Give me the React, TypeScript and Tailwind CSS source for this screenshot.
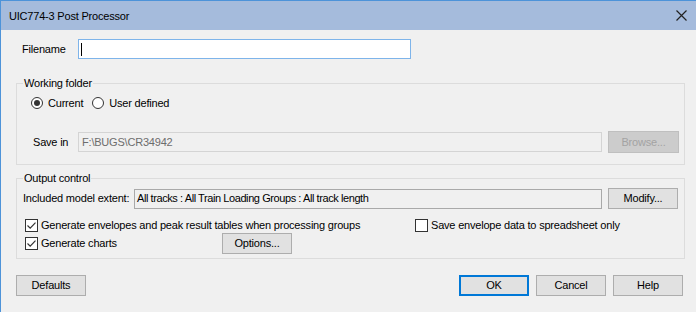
import React from "react";

const font = "font-['Liberation_Sans',Arial,sans-serif]";

function Button({
  label,
  disabled,
  primary,
}: {
  label: string;
  disabled?: boolean;
  primary?: boolean;
}) {
  let cls =
    "flex h-[21px] w-[70px] shrink-0 items-center justify-center border text-[11px] tracking-[-0.2px] ";
  if (disabled) {
    cls += "border-[#bfbfbf] bg-[#cccccc] text-[#a0a0a0]";
  } else if (primary) {
    cls += "border-[#0078d7] bg-[#e1e1e1] text-black shadow-[inset_0_0_0_1px_#0078d7]";
  } else {
    cls += "border-[#adadad] bg-[#e1e1e1] text-black";
  }
  return (
    <button type="button" disabled={disabled} className={cls}>
      {label}
    </button>
  );
}

function Checkbox({ label, checked }: { label: string; checked?: boolean }) {
  return (
    <label className="flex h-[14px] items-center">
      <span className="flex h-[13px] w-[13px] shrink-0 items-center justify-center border border-[#333333] bg-white">
        {checked && (
          <svg width="11" height="11" viewBox="0 0 11 11">
            <path d="M1.5 5.5 L4.2 8.2 L9.5 2.6" fill="none" stroke="#333333" strokeWidth="1.2" />
          </svg>
        )}
      </span>
      <span className="ml-[3px] whitespace-nowrap">{label}</span>
    </label>
  );
}

function Radio({ label, checked }: { label: string; checked?: boolean }) {
  return (
    <label className="flex h-[14px] items-center">
      <span className="flex h-[12px] w-[12px] shrink-0 items-center justify-center rounded-full border border-[#333333] bg-white">
        {checked && <span className="h-[6px] w-[6px] rounded-full bg-[#333333]" />}
      </span>
      <span className="ml-[5px] whitespace-nowrap">{label}</span>
    </label>
  );
}

export default function App() {
  return (
    <div
      className={`${font} h-[312px] w-[696px] overflow-hidden border-l border-t border-[#4d93d9] bg-[#f0f0f0] text-[11px] tracking-[-0.2px] text-black`}
    >
      <div className="flex h-[29px] items-center justify-between bg-[#a5bbdc] pl-[8px] pr-[9px]">
        <span className="pt-[2px]">UIC774-3 Post Processor</span>
        <svg width="11" height="11" viewBox="0 0 11 11">
          <path d="M0.5 0.5 L10.5 10.5 M10.5 0.5 L0.5 10.5" stroke="#222222" strokeWidth="1.2" />
        </svg>
      </div>

      <div className="pl-[15px] pt-[9px]">
        <div className="flex h-[20px] items-center">
          <span className="w-[62px] pl-[6px]">Filename</span>
          <div className="flex h-[20px] w-[333px] items-center border border-[#7eb4ea] bg-white pl-[2px]">
            <span className="h-[13px] w-px bg-black" />
          </div>
        </div>

        <fieldset className="mt-[17px] w-[669px] border border-[#dcdcdc] pb-[11px]">
          <legend className="ml-[6px] px-px leading-[14px]">Working folder</legend>
          <div className="mt-[6px] flex items-center gap-[9px] pl-[14px]">
            <Radio label="Current" checked />
            <Radio label="User defined" />
          </div>
          <div className="mt-[21px] flex h-[22px] items-center">
            <span className="w-[61px] pl-[16px]">Save in</span>
            <div className="flex h-[20px] w-[524px] items-center border border-[#d4d4d4] bg-[#f0f0f0] pl-[3px] text-[#6d6d6d]">
              F:\BUGS\CR34942
            </div>
            <div className="ml-[6px]">
              <button
                type="button"
                disabled
                className="flex h-[22px] w-[71px] items-center justify-center border border-[#bfbfbf] bg-[#cccccc] text-[#a3a3a3]"
              >
                Browse...
              </button>
            </div>
          </div>
        </fieldset>

        <fieldset className="mt-[6px] w-[669px] border border-[#dcdcdc] pb-[4px]">
          <legend className="ml-[6px] px-px leading-[14px]">Output control</legend>
          <div className="mt-[3px] flex h-[21px] items-center">
            <span className="w-[117px] whitespace-nowrap pl-[6px]">Included model extent:</span>
            <div className="flex h-[20px] w-[468px] items-center border border-[#a9a9a9] bg-[#f0f0f0] pl-[2px] text-[11px] tracking-[-0.42px]">
              All tracks : All Train Loading Groups : All track length
            </div>
            <div className="ml-[6px]">
              <Button label="Modify..." />
            </div>
          </div>
          <div className="mt-[9px] flex items-center pl-[8px]">
            <div className="w-[390px]">
              <Checkbox label="Generate envelopes and peak result tables when processing groups" checked />
            </div>
            <Checkbox label="Save envelope data to spreadsheet only" />
          </div>
          <div className="mt-px flex h-[21px] items-center pl-[8px]">
            <div className="w-[197px]">
              <Checkbox label="Generate charts" checked />
            </div>
            <Button label="Options..." />
          </div>
        </fieldset>

        <div className="mt-[16px] flex w-[667px] items-center justify-between">
          <Button label="Defaults" />
          <div className="flex gap-[7px]">
            <Button label="OK" primary />
            <Button label="Cancel" />
            <Button label="Help" />
          </div>
        </div>
      </div>
    </div>
  );
}
